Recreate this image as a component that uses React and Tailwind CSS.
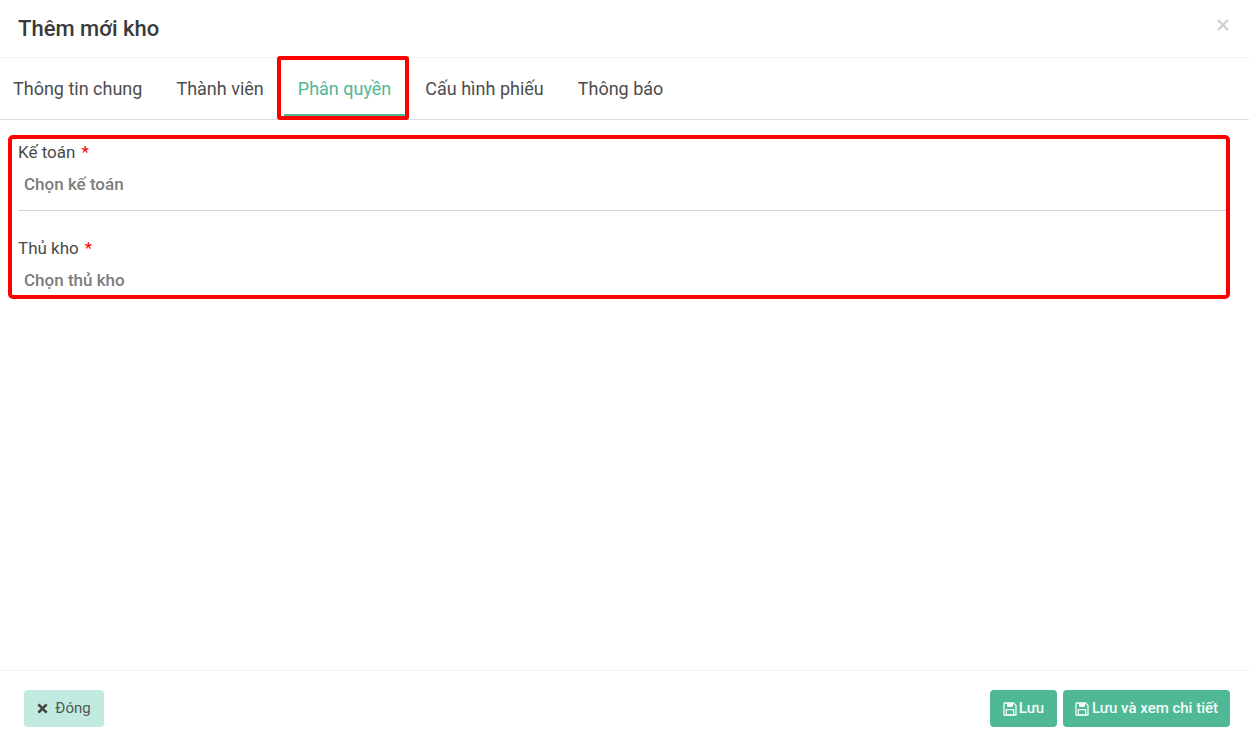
import React from "react";

function FloppyIcon({ className }) {
  return (
    <svg viewBox="0 0 14 14" className={className} fill="none">
      <path d="M1.5 1h9L13 3.5v9.5H1V1.5z" stroke="currentColor" strokeWidth="1.3" strokeLinejoin="round" />
      <path d="M4 1.2h6v3.6H4z" fill="currentColor" />
      <path d="M3.4 7.6h7.2v5.2H3.4z" stroke="currentColor" strokeWidth="1.2" />
    </svg>
  );
}

function Tab({ children, active }) {
  return (
    <div className={`relative flex h-full items-center px-[17px] ${active ? "text-[#4fb897]" : "text-[#4d4d4d]"}`}>
      {children}
      {active && (
        <>
          <span className="absolute bottom-[3px] left-[3px] right-[3px] h-[2px] bg-[#4fb897]" />
          <span className="absolute -left-[4px] -right-[1px] -top-[2px] -bottom-[1px] rounded-[3px] border-4 border-[#ff0000]" />
        </>
      )}
    </div>
  );
}

function Field({ label, placeholder, divider }) {
  return (
    <div className={divider ? "h-[70px] border-b border-[#d5d5dc]" : ""}>
      <div className="flex h-[24px] items-center gap-[6px] text-[17px] text-[#4a4a4a]">
        <span>{label}</span>
        <span className="text-[#ff0000]">*</span>
      </div>
      <div className="mt-[7px] pl-[6px] text-[17px] font-medium leading-[24px] text-[#7d7d7d]">{placeholder}</div>
    </div>
  );
}

export default function App() {
  return (
    <div className="flex h-[745px] w-[1249px] flex-col overflow-hidden bg-white font-['Roboto',sans-serif]">
      <header className="flex h-[58px] shrink-0 items-center justify-between border-b border-[#f2f2f2] pl-[18px] pr-[20px]">
        <h1 className="text-[22px] font-medium text-[#3a3a3a]">Thêm mới kho</h1>
        <span className="-mt-[8px] text-[#cfcfcf]">
          <svg viewBox="0 0 12 12" className="h-[12px] w-[12px]" fill="none" stroke="currentColor" strokeWidth="2.4">
            <path d="M1 1l10 10M11 1L1 11" />
          </svg>
        </span>
      </header>

      <nav className="-ml-[4px] flex h-[62px] shrink-0 items-center border-b border-[#dedede] text-[18px]">
        <Tab>Thông tin chung</Tab>
        <Tab>Thành viên</Tab>
        <Tab active>Phân quyền</Tab>
        <Tab>Cấu hình phiếu</Tab>
        <Tab>Thông báo</Tab>
      </nav>

      <section className="ml-[8px] mt-[15px] flex h-[164px] w-[1222px] shrink-0 flex-col rounded-[5px] border-4 border-[#ff0000] pl-[6px] pt-[2px]">
        <div className="mr-0">
          <Field label="Kế toán" placeholder="Chọn kế toán" divider />
        </div>
        <div className="mt-[26px]">
          <Field label="Thủ kho" placeholder="Chọn thủ kho" />
        </div>
      </section>

      <div className="flex-1" />

      <footer className="flex h-[75px] shrink-0 items-start justify-between border-t border-[#f2f2f2] pl-[24px] pr-[19px] pt-[19px]">
        <button className="flex h-[37px] w-[80px] items-center justify-center gap-[7px] rounded-[4px] bg-[#c1ebe0] text-[15px] text-[#555555]">
          <svg viewBox="0 0 12 12" className="h-[11px] w-[11px]" fill="none" stroke="#444444" strokeWidth="3">
            <path d="M1.5 1.5l9 9M10.5 1.5l-9 9" />
          </svg>
          Đóng
        </button>
        <div className="flex gap-[6px]">
          <button className="flex h-[37px] w-[67px] items-center justify-center gap-[2px] rounded-[4px] bg-[#4fb897] text-[15px] font-medium text-[#f4fbf8]">
            <FloppyIcon className="h-[14px] w-[14px]" />
            Lưu
          </button>
          <button className="flex h-[37px] w-[167px] items-center justify-center gap-[3px] rounded-[4px] bg-[#4fb897] text-[15px] font-medium text-[#f4fbf8]">
            <FloppyIcon className="h-[14px] w-[14px]" />
            Lưu và xem chi tiết
          </button>
        </div>
      </footer>
    </div>
  );
}
